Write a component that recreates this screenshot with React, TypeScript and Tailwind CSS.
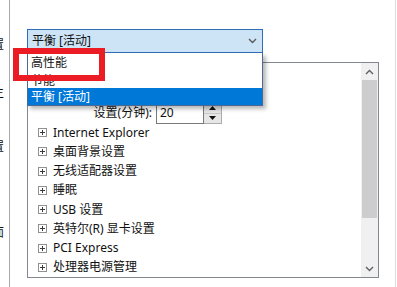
import React from "react";

const FONT = {
  fontFamily: '"Noto Sans", "Noto Sans CJK SC", sans-serif',
};

function PlusBox() {
  return (
    <svg width="9" height="9" viewBox="0 0 9 9" className="shrink-0">
      <rect x="0.5" y="0.5" width="8" height="8" fill="white" stroke="#919191" />
      <path d="M2 4.5H7M4.5 2V7" stroke="#3c3c3c" strokeWidth="1" />
    </svg>
  );
}

function TreeRow({ label }: { label: string }) {
  return (
    <div className="flex h-[20px] items-center pl-[10px] whitespace-nowrap">
      <PlusBox />
      <span className="ml-[6px] text-[12px] text-[#111]">{label}</span>
    </div>
  );
}

function Chevron({ up, color = "#606060" }: { up?: boolean; color?: string }) {
  return (
    <svg width="9" height="6" viewBox="0 0 9 6">
      <path
        d={up ? "M1 5L4.5 1.5L8 5" : "M1 1L4.5 4.5L8 1"}
        fill="none"
        stroke={color}
        strokeWidth="1.4"
      />
    </svg>
  );
}

export default function App() {
  const tree = [
    "Internet Explorer",
    "桌面背景设置",
    "无线适配器设置",
    "睡眠",
    "USB 设置",
    "英特尔(R) 显卡设置",
    "PCI Express",
    "处理器电源管理",
  ];
  return (
    <div
      className="relative flex h-[287px] w-[397px] overflow-hidden bg-white text-[#111]"
      style={FONT}
    >
      {/* left strip of the window behind */}
      <div className="flex w-[10px] shrink-0 flex-col overflow-hidden border-r border-[#a9a9a9] text-[12px] leading-[14px]">
        <span className="-ml-[8px] mt-[38px]">置</span>
        <span className="-ml-[8px] mt-[34px]">生</span>
        <span className="-ml-[8px] mt-[40px]">置</span>
        <span className="-ml-[8px] mt-[72px]">面</span>
      </div>

      {/* main content */}
      <div className="flex w-[385px] shrink-0 flex-col pl-[17px] pt-[29px]">
        {/* combo box */}
        <div className="relative w-[236px]">
          <div className="flex h-[24px] items-center justify-between border border-[#2f6db5] bg-[#cde4f7] pl-[4px] pr-[5px]">
            <span className="text-[12px]">平衡 [活动]</span>
            <Chevron color="#5a5a5a" />
          </div>
          {/* dropdown list */}
          <div className="absolute left-0 top-full z-10 w-[236px] border-x border-b border-[#4a6a94] bg-white shadow-[3px_3px_4px_rgba(0,0,0,0.28)]">
            <div className="flex h-[17px] items-center pl-[3px] pt-[3px] text-[12px]">高性能</div>
            <div className="flex h-[18px] items-center pl-[3px] pt-[4px] text-[12px]">节能</div>
            <div className="flex h-[17px] items-center bg-[#0078d7] pl-[3px] pt-[1px] text-[12px] text-white">
              平衡 [活动]
            </div>
          </div>
        </div>

        {/* settings panel */}
        <div className="mt-[9px] flex h-[216px] w-[352px] border border-[#828790] bg-white">
          <div className="flex w-[333px] flex-col overflow-hidden">
            <div className="h-[40px] shrink-0" />
            <div className="flex h-[20px] shrink-0 items-center">
              <div className="w-[124px] shrink-0 text-right text-[12px]">设置(分钟):</div>
              <div className="ml-[4px] flex h-[21px] w-[48px] items-center border border-[#7a7a7a] pl-[3px] text-[12px]">
                20
              </div>
              <div className="flex h-[21px] w-[18px] flex-col border border-l-0 border-[#adadad] bg-[#e6e6e6]">
                <div className="flex flex-1 items-center justify-center border-b border-[#c8c8c8]">
                  <svg width="7" height="4" viewBox="0 0 7 4">
                    <path d="M0 4L3.5 0L7 4Z" fill="#111" />
                  </svg>
                </div>
                <div className="flex flex-1 items-center justify-center">
                  <svg width="7" height="4" viewBox="0 0 7 4">
                    <path d="M0 0L3.5 4L7 0Z" fill="#111" />
                  </svg>
                </div>
              </div>
            </div>
            {tree.map((t) => (
              <TreeRow key={t} label={t} />
            ))}
          </div>
          {/* scrollbar */}
          <div className="flex w-[17px] flex-col bg-[#f0f0f0]">
            <div className="flex h-[17px] items-center justify-center">
              <Chevron up />
            </div>
            <div className="mx-[1px] h-[138px] bg-[#cdcdcd]" />
            <div className="flex-1" />
            <div className="flex h-[17px] items-center justify-center">
              <Chevron />
            </div>
          </div>
        </div>
      </div>

      {/* right edge line */}
      <div className="w-[1px] shrink-0 bg-[#dcdcdc]" />
      <div className="w-[1px] shrink-0" />

      {/* red highlight rectangle */}
      <div className="absolute left-[13px] top-[48px] z-20 h-[33px] w-[92px] border-[6px] border-[#ec1c24]" />
    </div>
  );
}
